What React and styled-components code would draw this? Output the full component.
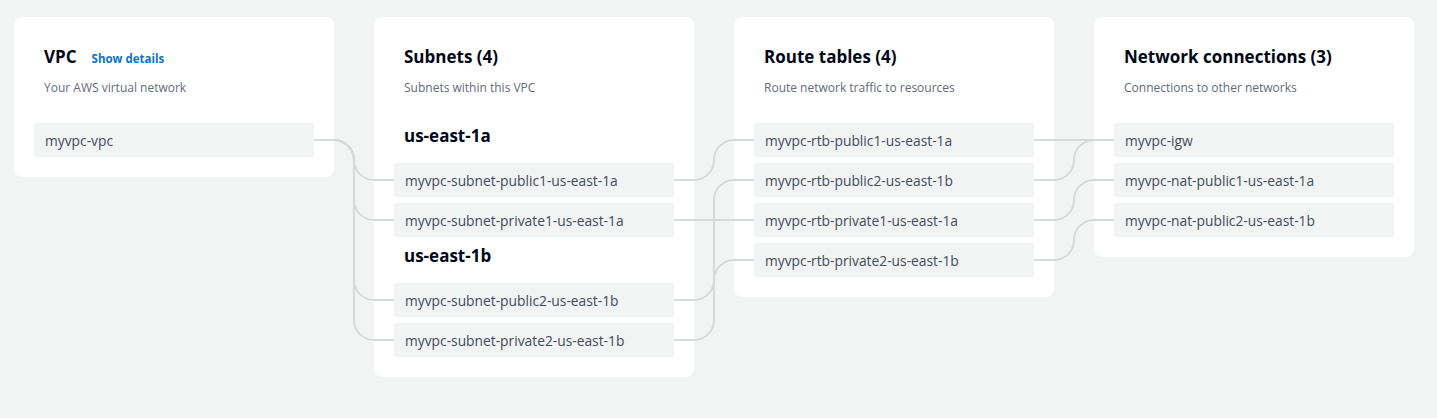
import React, { useLayoutEffect, useRef, useState } from 'react'
import styled, { createGlobalStyle } from 'styled-components'

const GlobalStyle = createGlobalStyle`
    body{
        margin: 0;
        background: #f2f3f3;
        font-family: "Open Sans", "Liberation Sans", Arial, sans-serif;
        color: #000716;
    }
`

const columns = [
    {
        key: 'vpc',
        title: 'VPC',
        link: 'Show details',
        subtitle: 'Your AWS virtual network',
        groups: [{ items: ['myvpc-vpc'] }],
    },
    {
        key: 'subnets',
        title: 'Subnets (4)',
        subtitle: 'Subnets within this VPC',
        groups: [
            { zone: 'us-east-1a', items: ['myvpc-subnet-public1-us-east-1a', 'myvpc-subnet-private1-us-east-1a'] },
            { zone: 'us-east-1b', items: ['myvpc-subnet-public2-us-east-1b', 'myvpc-subnet-private2-us-east-1b'] },
        ],
    },
    {
        key: 'rtb',
        title: 'Route tables (4)',
        subtitle: 'Route network traffic to resources',
        groups: [{ items: [
            'myvpc-rtb-public1-us-east-1a',
            'myvpc-rtb-public2-us-east-1b',
            'myvpc-rtb-private1-us-east-1a',
            'myvpc-rtb-private2-us-east-1b',
        ] }],
    },
    {
        key: 'net',
        title: 'Network connections (3)',
        subtitle: 'Connections to other networks',
        groups: [{ items: ['myvpc-igw', 'myvpc-nat-public1-us-east-1a', 'myvpc-nat-public2-us-east-1b'] }],
    },
]

const links = [
    ['myvpc-vpc', 'myvpc-subnet-public1-us-east-1a'],
    ['myvpc-vpc', 'myvpc-subnet-private1-us-east-1a'],
    ['myvpc-vpc', 'myvpc-subnet-public2-us-east-1b'],
    ['myvpc-vpc', 'myvpc-subnet-private2-us-east-1b'],
    ['myvpc-subnet-public1-us-east-1a', 'myvpc-rtb-public1-us-east-1a'],
    ['myvpc-subnet-private1-us-east-1a', 'myvpc-rtb-private1-us-east-1a'],
    ['myvpc-subnet-public2-us-east-1b', 'myvpc-rtb-public2-us-east-1b'],
    ['myvpc-subnet-private2-us-east-1b', 'myvpc-rtb-private2-us-east-1b'],
    ['myvpc-rtb-public1-us-east-1a', 'myvpc-igw'],
    ['myvpc-rtb-public2-us-east-1b', 'myvpc-igw'],
    ['myvpc-rtb-private1-us-east-1a', 'myvpc-nat-public1-us-east-1a'],
    ['myvpc-rtb-private2-us-east-1b', 'myvpc-nat-public2-us-east-1b'],
]

// horizontal -> bend -> vertical -> bend -> horizontal
function connector(x1, y1, x2, y2) {
    const dy = y2 - y1
    if (Math.abs(dy) < 1) return `M${x1} ${y1} H${x2}`
    const mid = (x1 + x2) / 2
    const r = Math.min(20, Math.abs(dy) / 2)
    const s = dy > 0 ? 1 : -1
    const sweepA = dy > 0 ? 1 : 0
    const sweepB = dy > 0 ? 0 : 1
    return `M${x1} ${y1} H${mid - r} A${r} ${r} 0 0 ${sweepA} ${mid} ${y1 + s * r} V${y2 - s * r} A${r} ${r} 0 0 ${sweepB} ${mid + r} ${y2} H${x2}`
}

function App() {
    const wrap = useRef(null)
    const nodes = useRef({})
    const [paths, setPaths] = useState([])

    useLayoutEffect(() => {
        const measure = () => {
            if (!wrap.current) return
            const base = wrap.current.getBoundingClientRect()
            const next = links.map(([from, to]) => {
                const a = nodes.current[from].getBoundingClientRect()
                const b = nodes.current[to].getBoundingClientRect()
                return connector(
                    a.right - base.left,
                    a.top + a.height / 2 - base.top,
                    b.left - base.left,
                    b.top + b.height / 2 - base.top
                )
            })
            setPaths(next)
        }
        measure()
        document.fonts && document.fonts.ready.then(measure)
        window.addEventListener('resize', measure)
        return () => window.removeEventListener('resize', measure)
    }, [])

    return (
        <>
            <GlobalStyle />
            <Diagram ref={wrap}>
                {columns.map((col) => (
                    <Card key={col.key}>
                        <Header>
                            <TitleRow>
                                <Title>{col.title}</Title>
                                {col.link && <DetailsLink href="#">{col.link}</DetailsLink>}
                            </TitleRow>
                            <Subtitle>{col.subtitle}</Subtitle>
                        </Header>
                        <List>
                            {col.groups.map((group, gi) => (
                                <React.Fragment key={gi}>
                                    {group.zone && <Zone>{group.zone}</Zone>}
                                    {group.items.map((name) => (
                                        <Item key={name} ref={(el) => { nodes.current[name] = el }}>
                                            {name}
                                        </Item>
                                    ))}
                                </React.Fragment>
                            ))}
                        </List>
                    </Card>
                ))}
                <Lines>
                    {paths.map((d, i) => (
                        <path key={i} d={d} />
                    ))}
                </Lines>
            </Diagram>
        </>
    )
}

const Diagram = styled.div`
    position: relative;
    display: flex;
    align-items: flex-start;
    gap: 40px;
    padding: 17px 14px;
`

const Card = styled.div`
    width: 320px;
    box-sizing: border-box;
    background: #ffffff;
    border-radius: 8px;
    padding: 20px;
`

const Header = styled.div`
    padding: 9px 10px 27px;
`

const TitleRow = styled.div`
    display: flex;
    align-items: baseline;
    gap: 15px;
`

const Title = styled.h2`
    margin: 0;
    font-size: 17px;
    line-height: 22px;
    font-weight: 700;
    color: #000716;
`

const DetailsLink = styled.a`
    font-size: 11.5px;
    font-weight: 700;
    color: #0972d3;
    text-decoration: none;
`

const Subtitle = styled.p`
    margin: 12px 0 0;
    font-size: 12px;
    line-height: 16px;
    color: #5f6b7a;
`

const List = styled.div`
    display: flex;
    flex-direction: column;
    gap: 6px;
`

const Zone = styled.h3`
    margin: 0;
    height: 34px;
    padding: 2px 10px 0;
    box-sizing: border-box;
    font-size: 17px;
    line-height: 22px;
    font-weight: 700;
    color: #000716;
`

const Item = styled.div`
    height: 34px;
    display: flex;
    align-items: center;
    padding: 0 11px;
    background: #f2f3f3;
    border-radius: 2px;
    font-size: 13.8px;
    color: #414d5c;
    white-space: nowrap;
`

const Lines = styled.svg`
    position: absolute;
    inset: 0;
    width: 100%;
    height: 100%;
    pointer-events: none;
    overflow: visible;

    path{
        fill: none;
        stroke: #d5dbdb;
        stroke-width: 2;
    }
`

export default App
